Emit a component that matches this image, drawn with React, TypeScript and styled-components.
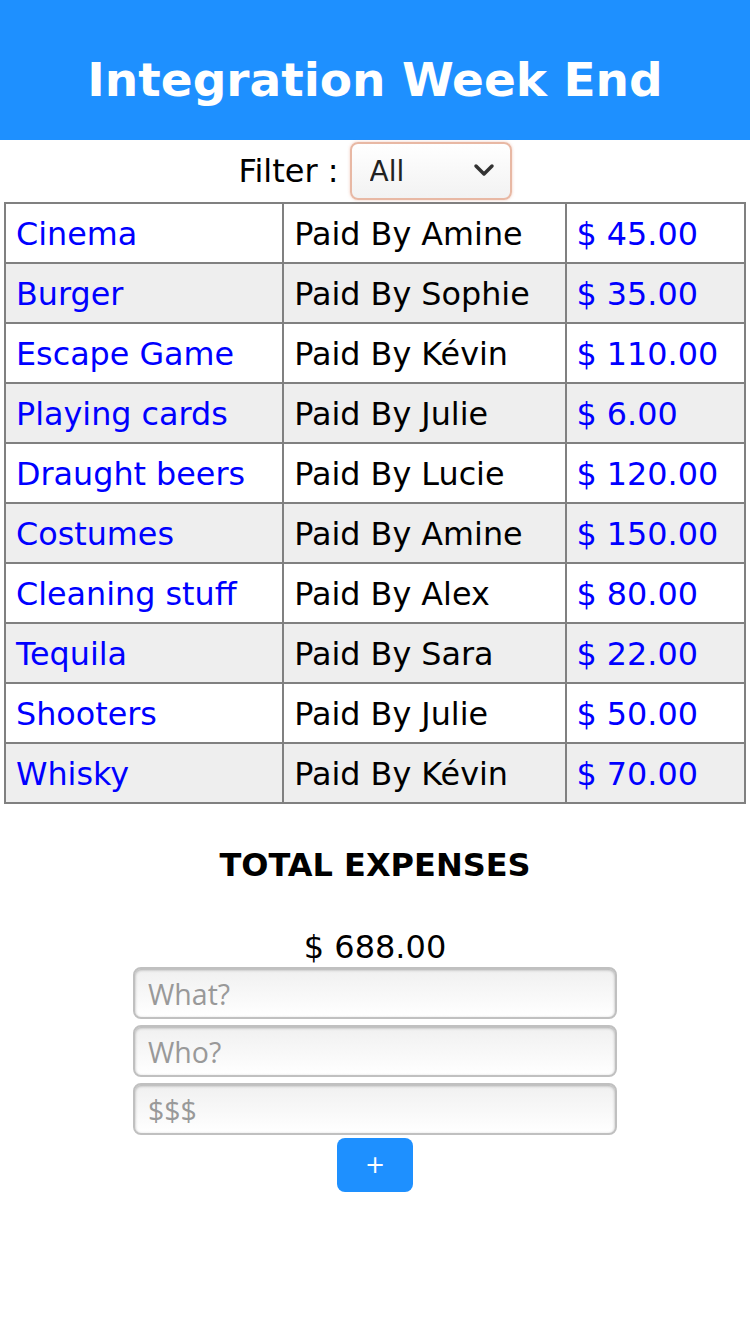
import * as React from 'react';
import styled, { createGlobalStyle } from 'styled-components';

const COLORS = {
  blue: '#1e90ff',
  link: '#0000ff',
  border: '#808080',
  stripe: '#eeeeee',
  placeholder: '#999999',
};

type Expense = {
  what: string;
  who: string;
  amount: number;
};

const expenses: Expense[] = [
  { what: 'Cinema', who: 'Amine', amount: 45 },
  { what: 'Burger', who: 'Sophie', amount: 35 },
  { what: 'Escape Game', who: 'Kévin', amount: 110 },
  { what: 'Playing cards', who: 'Julie', amount: 6 },
  { what: 'Draught beers', who: 'Lucie', amount: 120 },
  { what: 'Costumes', who: 'Amine', amount: 150 },
  { what: 'Cleaning stuff', who: 'Alex', amount: 80 },
  { what: 'Tequila', who: 'Sara', amount: 22 },
  { what: 'Shooters', who: 'Julie', amount: 50 },
  { what: 'Whisky', who: 'Kévin', amount: 70 },
];

const GlobalStyle = createGlobalStyle`
  body {
    margin: 0;
    font-family: "DejaVu Sans", "Liberation Sans", sans-serif;
    background: #fff;
    color: #000;
  }
`;

const Header = styled.header`
  height: 140px;
  background: ${COLORS.blue};
  display: flex;
  align-items: center;
  justify-content: center;
`;

const Title = styled.h1`
  margin: 0;
  padding-top: 18px;
  color: #fff;
  font-size: 47px;
  font-weight: bold;
`;

const FilterBar = styled.div`
  display: flex;
  align-items: center;
  justify-content: center;
  gap: 11px;
  height: 62px;
  font-size: 32px;
`;

const SelectWrap = styled.div`
  position: relative;
  width: 162px;
  height: 58px;
`;

const Select = styled.select`
  appearance: none;
  width: 100%;
  height: 100%;
  box-sizing: border-box;
  border: 2px solid #e8b8a4;
  border-radius: 8px;
  background: linear-gradient(#ffffff, #f2f2f2);
  box-shadow: 0 0 3px rgba(230, 150, 120, 0.5);
  padding: 0 0 0 18px;
  font-family: "DejaVu Sans", sans-serif;
  font-size: 28px;
  color: #222;
`;

const Chevron = styled.svg`
  position: absolute;
  right: 17px;
  top: 21px;
  pointer-events: none;
`;

const Table = styled.table`
  width: 742px;
  margin: 0 4px;
  border-collapse: collapse;
  border: 2px solid ${COLORS.border};
  font-size: 31.8px;
`;

const Row = styled.tr<{ $striped: boolean }>`
  height: 60px;
  background: ${(p) => (p.$striped ? COLORS.stripe : '#fff')};
`;

const Cell = styled.td<{ $link?: boolean; $width: number }>`
  width: ${(p) => p.$width}px;
  border: 2px solid ${COLORS.border};
  padding: 0 0 0 10px;
  box-sizing: border-box;
  color: ${(p) => (p.$link ? COLORS.link : '#000')};
  white-space: nowrap;
`;

const Summary = styled.section`
  display: flex;
  flex-direction: column;
  align-items: center;
`;

const TotalLabel = styled.h2`
  margin: 42px 0 0;
  font-size: 32px;
  font-weight: bold;
`;

const TotalValue = styled.div`
  margin-top: 44px;
  font-size: 32px;
  line-height: 38px;
`;

const Form = styled.form`
  display: flex;
  flex-direction: column;
  align-items: center;
  gap: 6px;
  margin-top: 1px;
`;

const Input = styled.input`
  width: 484px;
  height: 52px;
  box-sizing: border-box;
  border: 2px solid #c0c0c0;
  border-radius: 8px;
  background: linear-gradient(#f0f0f0, #ffffff);
  box-shadow: inset 0 1px 3px rgba(0, 0, 0, 0.3);
  padding: 2px 13px 0;
  font-family: "Open Sans", "Noto Sans", sans-serif;
  font-size: 28.5px;
  &::placeholder {
    color: ${COLORS.placeholder};
  }
`;

const AddButton = styled.button`
  width: 76px;
  height: 54px;
  margin-top: -3px;
  border: none;
  border-radius: 8px;
  background: ${COLORS.blue};
  color: #fff;
  font-family: "DejaVu Sans", sans-serif;
  font-size: 24px;
`;

const formatAmount = (n: number) => `$ ${n.toFixed(2)}`;

const App: React.FunctionComponent = () => {
  const total = expenses.reduce((sum, e) => sum + e.amount, 0);

  return (
    <div>
      <GlobalStyle />
      <Header>
        <Title>{'Integration Week End'}</Title>
      </Header>
      <FilterBar>
        <span>{'Filter :'}</span>
        <SelectWrap>
          <Select defaultValue="all">
            <option value="all">{'All'}</option>
          </Select>
          <Chevron width="22" height="14" viewBox="0 0 22 14">
            <path d="M3 3 L11 11 L19 3" fill="none" stroke="#333" strokeWidth="3.5" strokeLinecap="round" strokeLinejoin="round" />
          </Chevron>
        </SelectWrap>
      </FilterBar>
      <Table>
        <tbody>
          {expenses.map((e, i) => (
            <Row key={e.what} $striped={i % 2 === 1}>
              <Cell $link $width={279}>{e.what}</Cell>
              <Cell $width={283}>{`Paid By ${e.who}`}</Cell>
              <Cell $link $width={180}>{formatAmount(e.amount)}</Cell>
            </Row>
          ))}
        </tbody>
      </Table>
      <Summary>
        <TotalLabel>{'TOTAL EXPENSES'}</TotalLabel>
        <TotalValue>{formatAmount(total)}</TotalValue>
        <Form onSubmit={(ev) => ev.preventDefault()}>
          <Input placeholder="What?" />
          <Input placeholder="Who?" />
          <Input placeholder="$$$" />
          <AddButton type="submit">{'+'}</AddButton>
        </Form>
      </Summary>
    </div>
  );
};

export default App;
